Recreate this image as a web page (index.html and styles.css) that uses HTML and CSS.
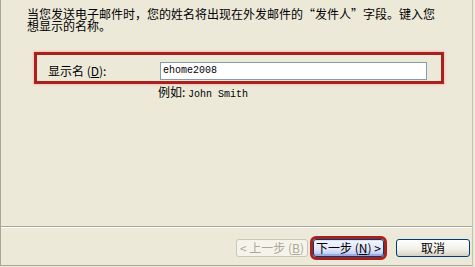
FILE: index.html
```html
<!DOCTYPE html>
<html>
<head>
  <meta charset="utf-8">
  <meta name="viewport" content="width=device-width">
  <title>Internet 连接向导</title>
  <link rel="stylesheet" href="styles.css">
</head>
<body>
  <div class="dialog">
    <div class="content">
      <p class="intro">当您发送电子邮件时，您的姓名将出现在外发邮件的“发件人”字段。键入您想显示的名称。</p>
      <div class="field-box">
        <label class="field-label" for="name">显示名 (<u>D</u>):</label>
        <input class="field-input" id="name" type="text" value="ehome2008">
      </div>
      <div class="hint">例如: <span class="mono">John Smith</span></div>
    </div>
    <div class="footer">
      <button class="btn btn-back" disabled>&lt; 上一步 (<u>B</u>)</button>
      <button class="btn btn-next">下一步 (<u>N</u>) &gt;</button>
      <button class="btn btn-cancel">取消</button>
    </div>
  </div>
</body>
</html>
```

FILE: styles.css
```css
*{
  margin: 0;
  padding: 0;
  box-sizing: border-box;
}
body{
  width: 475px;
  height: 267px;
  background: #ece9d8;
  font-family: "Noto Sans CJK SC", "Liberation Sans", sans-serif;
  font-size: 12px;
  color: #000;
  overflow: hidden;
}
.dialog{
  width: 473px;
  height: 266px;
  display: flex;
  flex-direction: column;
  border-left: 1px solid #a9a898;
  border-right: 1px solid #c4c2b4;
  border-bottom: 1px solid #a9a898;
}
.content{
  flex: 1;
  padding: 8px 0 0 26px;
}
.intro{
  width: 414px;
  line-height: 12px;
}
.field-box{
  display: flex;
  align-items: center;
  width: 410px;
  height: 32px;
  margin: 20px 0 0 7px;
  padding: 5px 0 0 11px;
  border: 3px solid #a9201c;
  box-shadow: 0 0 2px 1px #f6c4bc;
}
.field-label{
  width: 112px;
}
.field-input{
  width: 267px;
  height: 18px;
  padding: 0 2px;
  border: 1px solid #7f9db9;
  background: #fff;
  font-family: "Liberation Mono", monospace;
  font-size: 10px;
  color: #000;
  outline: none;
}
.hint{
  margin: 2px 0 0 131px;
  line-height: 12px;
}
.mono{
  font-family: "Liberation Mono", monospace;
  font-size: 10px;
}
.footer{
  height: 39px;
  display: flex;
  justify-content: flex-end;
  align-items: flex-start;
  padding: 12px 2px 0 0;
  border-top: 1px solid #aca899;
  box-shadow: inset 0 1px 0 #fff;
}
.btn{
  height: 18px;
  width: 72px;
  font-family: "Noto Sans CJK SC", "Liberation Sans", sans-serif;
  font-size: 12px;
  line-height: 16px;
  border: 1px solid #003c74;
  border-radius: 3px;
  background: linear-gradient(#ffffff, #f0efe8 60%, #d6d0c5);
  color: #000;
}
.btn-back{
  color: #aca899;
  border-color: #c9c7ba;
  background: #f5f4ea;
}
.btn-next{
  margin-left: 5px;
  width: 71px;
  background: linear-gradient(#f4f6fe, #dfe4f8 60%, #b9c4ef);
  box-shadow: inset 0 -2px 0 #97aee2, inset 0 1px 0 #cee7ff;
  outline: 3px solid #a9201c;
  outline-offset: 0;
}
.btn-cancel{
  margin-left: 12px;
  width: 74px;
}
```
